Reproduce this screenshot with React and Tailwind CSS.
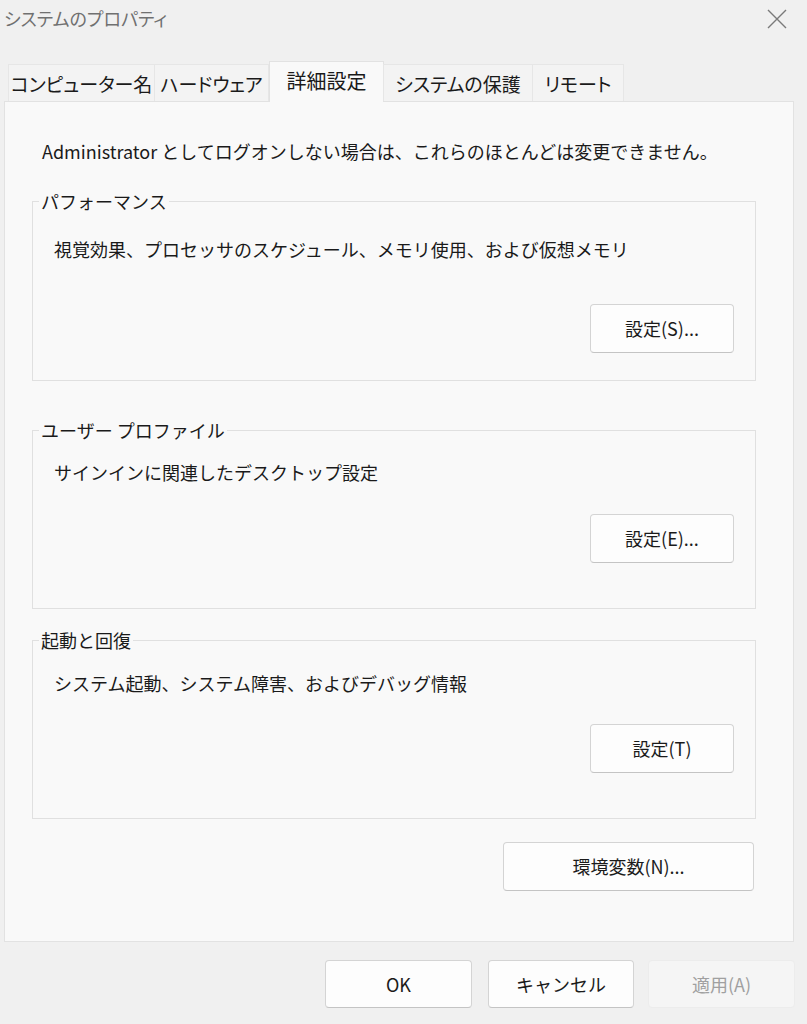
export default function App() {
  const tabs = [
    { label: "コンピューター名", w: "w-[147px]" },
    { label: "ハードウェア", w: "w-[115px]" },
    { label: "詳細設定", w: "w-[115px]", active: true },
    { label: "システムの保護", w: "w-[150px]" },
    { label: "リモート", w: "w-[92px]" },
  ];

  const btn =
    "flex items-center justify-center rounded-[4px] border border-[#d4d4d4] border-b-[#c4c4c4] bg-[#fdfdfd] text-[18px] text-[#1b1b1b]";

  return (
    <div className="w-[807px] h-[1024px] overflow-hidden bg-[#f0f0f0] font-['Noto_Sans_CJK_JP','Noto_Sans',sans-serif] text-[#1a1a1a] flex flex-col">
      {/* Title bar */}
      <div className="h-[36px] flex items-center justify-between pl-[4px] pr-[20px]">
        <span className="text-[18px] text-[#707070] leading-[24px] [font-feature-settings:'palt']">システムのプロパティ</span>
        <svg width="20" height="20" viewBox="0 0 20 20" className="mt-[2px]">
          <path d="M1 1 L19 19 M19 1 L1 19" stroke="#7a7a7a" strokeWidth="1.4" fill="none" />
        </svg>
      </div>

      {/* Tabs */}
      <div className="mt-[25px] flex items-end pl-[8px] relative z-10 [font-feature-settings:'palt']">
        {tabs.map((t) =>
          t.active ? (
            <div
              key={t.label}
              className={`${t.w} h-[41px] -mb-px flex items-center justify-center bg-[#f9f9f9] border-t border-l border-r border-[#e2e2e2] text-[20px] leading-[24px] pb-[2px]`}
            >
              {t.label}
            </div>
          ) : (
            <div
              key={t.label}
              className={`${t.w} h-[37px] flex items-center justify-center bg-[#f3f3f3] border-t border-l border-r border-[#e6e6e6] text-[19px] leading-[24px] pt-[2px] -ml-px first:ml-0`}
            >
              {t.label}
            </div>
          )
        )}
      </div>

      {/* Panel */}
      <div className="ml-[4px] w-[790px] h-[841px] bg-[#f9f9f9] border border-[#e2e2e2] flex flex-col pl-[27px]">
        <p className="mt-[35px] ml-[10px] text-[18px] leading-[28px]">
          Administrator としてログオンしない場合は、これらのほとんどは変更できません。
        </p>

        <div className="w-[724px] flex flex-col">
          {/* Group 1 */}
          <fieldset className="mt-[22px] border border-[#e0e0e0] px-[21px] pb-[27px] flex flex-col">
            <legend className="ml-[-15px] px-[2px] text-[18px] leading-[28px]">パフォーマンス</legend>
            <p className="mt-[20px] text-[18px] leading-[28px]">
              視覚効果、プロセッサのスケジュール、メモリ使用、および仮想メモリ
            </p>
            <div className={`${btn} self-end mt-[41px] w-[144px] h-[49px]`}>設定(S)...</div>
          </fieldset>

          {/* Group 2 */}
          <fieldset className="mt-[35px] border border-[#e0e0e0] px-[21px] pb-[45px] flex flex-col">
            <legend className="ml-[-15px] px-[2px] text-[18px] leading-[28px]">ユーザー プロファイル</legend>
            <p className="mt-[14px] text-[18px] leading-[28px]">サインインに関連したデスクトップ設定</p>
            <div className={`${btn} self-end mt-[28px] w-[144px] h-[49px]`}>設定(E)...</div>
          </fieldset>

          {/* Group 3 */}
          <fieldset className="mt-[17px] border border-[#e0e0e0] px-[21px] pb-[45px] flex flex-col">
            <legend className="ml-[-15px] px-[2px] text-[18px] leading-[28px]">起動と回復</legend>
            <p className="mt-[15px] text-[18px] leading-[28px]">システム起動、システム障害、およびデバッグ情報</p>
            <div className={`${btn} self-end mt-[27px] w-[144px] h-[49px]`}>設定(T)</div>
          </fieldset>

          <div className={`${btn} self-end mr-[2px] mt-[23px] w-[251px] h-[49px]`}>環境変数(N)...</div>
        </div>
      </div>

      {/* Bottom buttons */}
      <div className="mt-[18px] flex justify-end pr-[12px]">
        <div className={`${btn} w-[147px] h-[48px]`}>OK</div>
        <div className={`${btn} ml-[16px] w-[146px] h-[48px]`}>キャンセル</div>
        <div className="ml-[14px] w-[147px] h-[48px] flex items-center justify-center rounded-[4px] border border-[#ececec] bg-[#f5f5f5] text-[18px] text-[#a0a0a0]">
          適用(A)
        </div>
      </div>
    </div>
  );
}
